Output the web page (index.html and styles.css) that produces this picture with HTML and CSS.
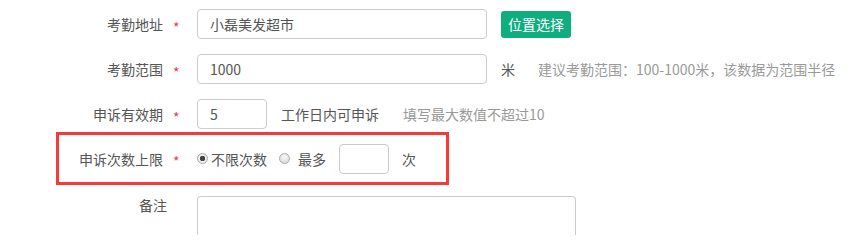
FILE: index.html
```html
<!DOCTYPE html>
<html lang="zh">
<head>
<meta charset="utf-8">
<title>考勤设置</title>
<link rel="stylesheet" href="styles.css">
</head>
<body>
<div class="form">
  <div class="row">
    <span class="lbl">考勤地址</span><span class="req">*</span>
    <input class="ipt ipt-lg" type="text" value="小磊美发超市">
    <button class="btn" type="button">位置选择</button>
  </div>
  <div class="row">
    <span class="lbl">考勤范围</span><span class="req">*</span>
    <input class="ipt ipt-lg" type="text" value="1000">
    <span class="unit">米</span>
    <span class="hint hint-wide">建议考勤范围：100-1000米，该数据为范围半径</span>
  </div>
  <div class="row row-tight">
    <span class="lbl">申诉有效期</span><span class="req">*</span>
    <input class="ipt ipt-md" type="text" value="5">
    <span class="unit">工作日内可申诉</span>
    <span class="hint">填写最大数值不超过10</span>
  </div>
  <div class="row row-mark">
    <span class="lbl lbl-mark">申诉次数上限</span><span class="req">*</span>
    <label class="opt"><input class="radio" type="radio" name="lim" checked><span>不限次数</span></label>
    <label class="opt opt-2"><input class="radio" type="radio" name="lim"><span class="opt-text">最多</span></label>
    <input class="ipt ipt-sm" type="text" value="">
    <span class="unit">次</span>
  </div>
  <div class="row row-note">
    <span class="lbl lbl-note">备注</span>
    <textarea class="area"></textarea>
  </div>
</div>
</body>
</html>
```

FILE: styles.css
```css
html, body {
  margin: 0;
  padding: 0;
  background: #fff;
}

body {
  font-family: "Noto Sans CJK SC", "Noto Sans", sans-serif;
  font-size: 14px;
  color: #555;
}

.form {
  padding-top: 9px;
}

.row {
  display: flex;
  align-items: center;
  height: 30px;
  margin-bottom: 15px;
}

.row-tight {
  margin-bottom: 3px;
}

.lbl {
  width: 163px;
  text-align: right;
  color: #555;
  white-space: nowrap;
}

.req {
  width: 24px;
  padding-left: 10px;
  padding-top: 5px;
  color: #f03c3c;
  font-size: 14px;
  line-height: 14px;
}

.ipt {
  box-sizing: border-box;
  height: 30px;
  border: 1px solid #ccc;
  border-radius: 4px;
  padding: 0 12px;
  font-family: inherit;
  font-size: 14px;
  color: #555;
  outline: none;
  background: #fff;
  margin: 0;
}

.ipt-lg {
  width: 290px;
}

.ipt-md {
  width: 70px;
}

.ipt-sm {
  width: 50px;
  margin-left: 13px;
}

.btn {
  margin-left: 14px;
  width: 70px;
  height: 27px;
  border: 0;
  border-radius: 3px;
  background: #0eae7f;
  color: #fff;
  font-family: inherit;
  font-size: 14px;
  padding: 0;
  cursor: pointer;
}

.unit {
  margin-left: 14px;
  color: #555;
  white-space: nowrap;
}

.row .unit:first-of-type {
  margin-left: 15px;
}

.hint {
  margin-left: 24px;
  color: #999;
  white-space: nowrap;
}

.hint-wide {
  margin-left: 23px;
}

.row-mark {
  box-sizing: border-box;
  width: 393px;
  height: 53px;
  margin-left: 56px;
  margin-bottom: 11px;
  border: 3px solid #f43a3a;
}

.lbl-mark {
  width: 104px;
}

.row-mark .unit {
  margin-left: 13px;
}

.opt {
  display: flex;
  align-items: center;
  white-space: nowrap;
}

.opt-2 {
  margin-left: 12px;
}

.opt-text {
  margin-left: 5px;
}

.radio {
  appearance: none;
  -webkit-appearance: none;
  box-sizing: border-box;
  width: 11px;
  height: 11px;
  margin: 0 3px 0 0;
  border: 1px solid #aaa;
  border-radius: 50%;
  background: radial-gradient(circle at 50% 35%, #fafafa 0%, #e2e2e2 60%, #cfcfcf 100%);
}

.radio:checked {
  background: radial-gradient(circle, #444 0, #444 2.5px, #f2f2f2 3px, #dcdcdc 100%);
}

.row-note {
  align-items: flex-start;
  height: auto;
  margin-bottom: 0;
}

.lbl-note {
  width: 167px;
  margin-right: 30px;
  line-height: 18px;
}

.area {
  box-sizing: border-box;
  width: 379px;
  height: 39px;
  border: 1px solid #ccc;
  border-bottom: 0;
  border-radius: 4px 4px 0 0;
  resize: none;
  margin: 0;
  outline: none;
  font-family: inherit;
}
```
